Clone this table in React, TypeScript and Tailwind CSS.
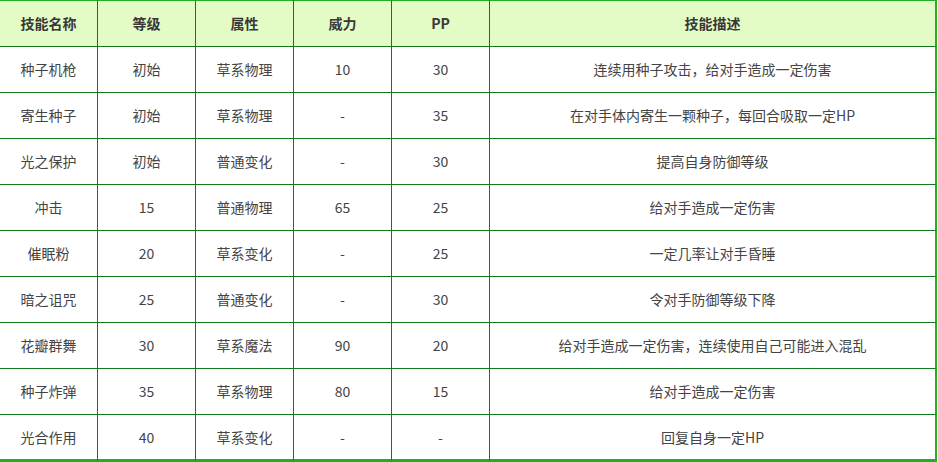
import React from "react";

const HEAD = ["技能名称", "等级", "属性", "威力", "PP", "技能描述"];

const ROWS: string[][] = [
  ["种子机枪", "初始", "草系物理", "10", "30", "连续用种子攻击，给对手造成一定伤害"],
  ["寄生种子", "初始", "草系物理", "-", "35", "在对手体内寄生一颗种子，每回合吸取一定HP"],
  ["光之保护", "初始", "普通变化", "-", "30", "提高自身防御等级"],
  ["冲击", "15", "普通物理", "65", "25", "给对手造成一定伤害"],
  ["催眠粉", "20", "草系变化", "-", "25", "一定几率让对手昏睡"],
  ["暗之诅咒", "25", "普通变化", "-", "30", "令对手防御等级下降"],
  ["花瓣群舞", "30", "草系魔法", "90", "20", "给对手造成一定伤害，连续使用自己可能进入混乱"],
  ["种子炸弹", "35", "草系物理", "80", "15", "给对手造成一定伤害"],
  ["光合作用", "40", "草系变化", "-", "-", "回复自身一定HP"],
];

const WIDTHS = ["w-[98px]", "w-[98px]", "w-[98px]", "w-[98px]", "w-[98px]", "w-[447px]"];

export default function App() {
  return (
    <div className="w-[938px] h-[462px] bg-white overflow-hidden font-['Microsoft_YaHei','Noto_Sans_CJK_SC',sans-serif] text-[14px]">
      <table className="table-fixed border-separate border-spacing-0 w-[937px]">
        <thead>
          <tr>
            {HEAD.map((h, i) => (
              <th
                key={h}
                className={`${WIDTHS[i]} h-[47px] p-0 bg-[#e3fcc6] text-[#383838] font-bold text-center border-t border-t-[#22b022] border-b border-b-[#117a1d] ${
                  i === 5 ? "border-r-2 border-r-[#22b022]" : "border-r border-r-[#117a1d]"
                }`}
              >
                {h}
              </th>
            ))}
          </tr>
        </thead>
        <tbody>
          {ROWS.map((row, r) => {
            const last = r === ROWS.length - 1;
            return (
              <tr key={row[0]}>
                {row.map((cell, i) => (
                  <td
                    key={i}
                    className={`p-0 text-center text-[#444] font-normal ${
                      last ? "h-[47px] border-b-[3px] border-b-[#22b022]" : "h-[46px] border-b border-b-[#117a1d]"
                    } ${i === 5 ? "border-r-2 border-r-[#22b022]" : "border-r border-r-[#117a1d]"}`}
                  >
                    {cell}
                  </td>
                ))}
              </tr>
            );
          })}
        </tbody>
      </table>
    </div>
  );
}
